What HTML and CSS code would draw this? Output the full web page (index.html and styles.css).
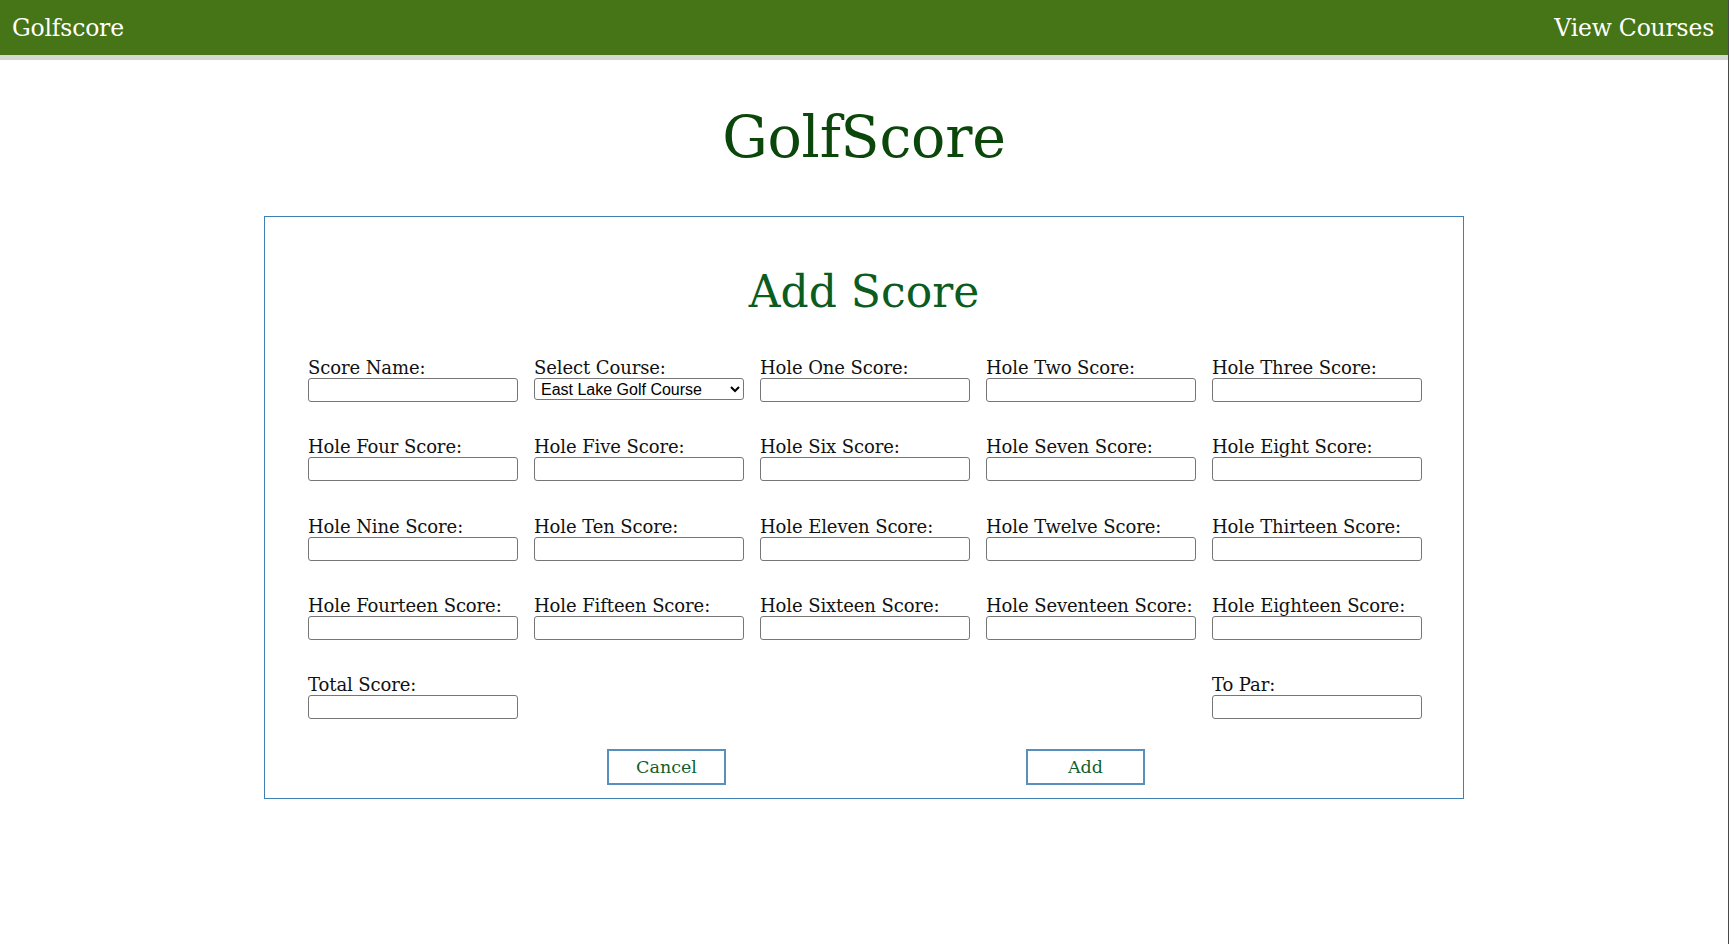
FILE: index.html
```html
<!DOCTYPE html>
<html lang="en">
<head>
<meta charset="utf-8">
<title>GolfScore - Add Score</title>
<link rel="stylesheet" href="styles.css">
</head>
<body>
<div class="page">
  <header class="topbar">
    <a class="brand" href="#">Golfscore</a>
    <a class="nav-link" href="#">View Courses</a>
  </header>

  <h1 class="site-title">GolfScore</h1>

  <form class="score-card">
    <h2 class="card-title">Add Score</h2>
    <div class="fields">
      <div class="field"><label>Score Name:</label><input type="text"></div>
      <div class="field"><label>Select Course:</label>
        <select class="course-select"><option>East Lake Golf Course</option></select>
      </div>
      <div class="field"><label>Hole One Score:</label><input type="text"></div>
      <div class="field"><label>Hole Two Score:</label><input type="text"></div>
      <div class="field"><label>Hole Three Score:</label><input type="text"></div>

      <div class="field"><label>Hole Four Score:</label><input type="text"></div>
      <div class="field"><label>Hole Five Score:</label><input type="text"></div>
      <div class="field"><label>Hole Six Score:</label><input type="text"></div>
      <div class="field"><label>Hole Seven Score:</label><input type="text"></div>
      <div class="field"><label>Hole Eight Score:</label><input type="text"></div>

      <div class="field"><label>Hole Nine Score:</label><input type="text"></div>
      <div class="field"><label>Hole Ten Score:</label><input type="text"></div>
      <div class="field"><label>Hole Eleven Score:</label><input type="text"></div>
      <div class="field"><label>Hole Twelve Score:</label><input type="text"></div>
      <div class="field"><label>Hole Thirteen Score:</label><input type="text"></div>

      <div class="field"><label>Hole Fourteen Score:</label><input type="text"></div>
      <div class="field"><label>Hole Fifteen Score:</label><input type="text"></div>
      <div class="field"><label>Hole Sixteen Score:</label><input type="text"></div>
      <div class="field"><label>Hole Seventeen Score:</label><input type="text"></div>
      <div class="field"><label>Hole Eighteen Score:</label><input type="text"></div>

      <div class="field"><label>Total Score:</label><input type="text"></div>
      <div class="field field-last"><label>To Par:</label><input type="text"></div>
    </div>
    <div class="actions">
      <button type="button" class="btn">Cancel</button>
      <button type="button" class="btn">Add</button>
    </div>
  </form>
</div>
</body>
</html>
```

FILE: styles.css
```css
html, body {
  margin: 0;
  padding: 0;
  background: #ffffff;
}

body {
  font-family: "DejaVu Serif", "Liberation Serif", serif;
  color: #111111;
}

.page {
  width: 1729px;
  min-height: 944px;
  border-right: 1px solid #4a4a4a;
  box-sizing: border-box;
  overflow: hidden;
}

.topbar {
  height: 55px;
  background: #457516;
  border-bottom: 5px solid #d1d9d2;
  display: flex;
  align-items: center;
  justify-content: space-between;
  padding: 0 14px 0 12px;
}

.topbar a {
  color: #ffffff;
  text-decoration: none;
  font-size: 23.5px;
  letter-spacing: -0.2px;
}

.site-title {
  margin: 44px 0 46px;
  text-align: center;
  font-size: 57px;
  font-weight: normal;
  color: #0b460b;
  line-height: normal;
  letter-spacing: -0.2px;
}

.score-card {
  width: 1200px;
  box-sizing: border-box;
  margin: 0 auto;
  border: 1px solid #3f80b2;
  padding: 49px 43px 13px;
}

.card-title {
  margin: 0 0 40px;
  text-align: center;
  font-size: 44px;
  font-weight: normal;
  color: #0b5c1f;
  line-height: normal;
}

.fields {
  display: grid;
  grid-template-columns: repeat(5, 210px);
  column-gap: 16px;
  row-gap: 34.25px;
}

.field {
  display: flex;
  flex-direction: column;
}

.field-last {
  grid-column: 5;
}

.field label {
  font-size: 18px;
  line-height: 21px;
  white-space: nowrap;
  letter-spacing: -0.1px;
}

.field input {
  box-sizing: border-box;
  width: 210px;
  height: 24px;
  margin: 0;
  border: 1px solid #767676;
  border-radius: 3px;
  background: #ffffff;
}

.course-select {
  box-sizing: border-box;
  width: 210px;
  height: 22px;
  margin: 0;
  font-family: "Liberation Sans", Arial, sans-serif;
  font-size: 16px;
  color: #000000;
  border: 1px solid #767676;
  border-radius: 3px;
  background: #ffffff;
  padding: 0 2px;
}

.actions {
  display: flex;
  justify-content: center;
  gap: 300px;
  padding-left: 24px;
  margin-top: 30px;
}

.btn {
  width: 119px;
  height: 36px;
  box-sizing: border-box;
  background: #ffffff;
  border: 2px solid #5890bb;
  color: #12602a;
  font-family: "DejaVu Serif", "Liberation Serif", serif;
  font-size: 17.5px;
  padding: 0;
}
```
